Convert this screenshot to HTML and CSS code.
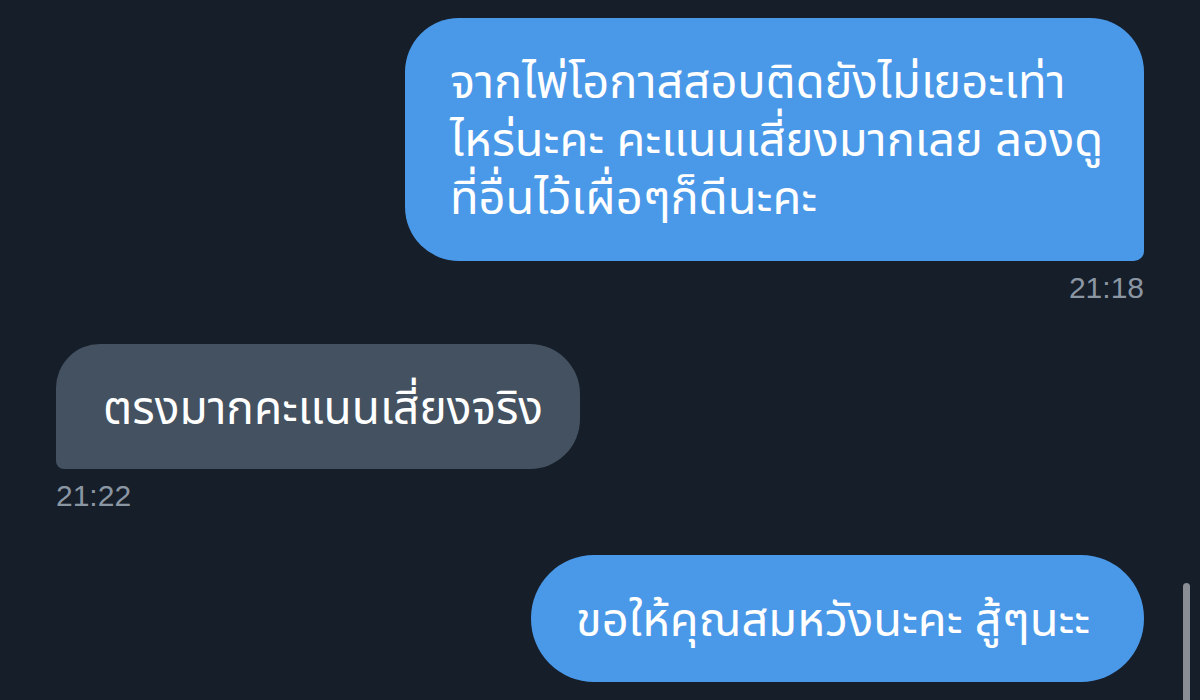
FILE: index.html
```html
<!DOCTYPE html>
<html lang="th">
<head>
<meta charset="utf-8">
<title>DM</title>
<link rel="stylesheet" href="styles.css">
</head>
<body>
<div class="chat">
  <div class="msg msg-out">
    <div class="bubble bubble-blue bubble-first">
      <span class="line">จากไพ่โอกาสสอบติดยังไม่เยอะเท่า</span>
      <span class="line">ไหร่นะคะ คะแนนเสี่ยงมากเลย ลองดู</span>
      <span class="line">ที่อื่นไว้เผื่อๆก็ดีนะคะ</span>
    </div>
    <div class="time">21:18</div>
  </div>
  <div class="msg msg-in">
    <div class="bubble bubble-gray">
      <span class="line">ตรงมากคะแนนเสี่ยงจริง</span>
    </div>
    <div class="time">21:22</div>
  </div>
  <div class="msg msg-out msg-last">
    <div class="bubble bubble-blue bubble-last">
      <span class="line">ขอให้คุณสมหวังนะคะ สู้ๆนะะ</span>
    </div>
  </div>
</div>
<div class="scrollbar"></div>
</body>
</html>
```
FILE: styles.css
```css
html, body {
  margin: 0;
  padding: 0;
  height: 100%;
  overflow: hidden;
}
body {
  background: #161e29;
  font-family: "Noto Sans", "Noto Sans Thai", "DejaVu Sans", sans-serif;
  color: #ffffff;
  position: relative;
}
.chat {
  display: flex;
  flex-direction: column;
  padding: 18px 56px 0 56px;
}
.msg {
  display: flex;
  flex-direction: column;
}
.msg-out {
  align-items: flex-end;
}
.msg-in {
  align-items: flex-start;
  margin-top: 39px;
}
.msg-last {
  margin-top: 42px;
}
.bubble {
  font-size: 47px;
  line-height: 58px;
  display: flex;
  flex-direction: column;
  box-sizing: border-box;
}
.line {
  white-space: nowrap;
}
.bubble-blue {
  background: #4a98e8;
}
.bubble-gray {
  background: #435160;
}
.bubble-first {
  width: 739px;
  height: 243px;
  padding: 33px 45px 0 45px;
  border-radius: 54px 54px 10px 54px;
}
.bubble-gray {
  width: 524px;
  height: 125px;
  padding: 33px 47px 0 47px;
  border-radius: 44px 50px 50px 8px;
  font-size: 46px;
}
.bubble-last {
  width: 613px;
  height: 127px;
  padding: 34px 45px 0 45px;
  border-radius: 63px;
}
.time {
  font-family: "Liberation Sans", Arial, sans-serif;
  font-size: 30px;
  color: #8b96a3;
  margin-top: 10px;
  line-height: 34px;
}
.scrollbar {
  position: absolute;
  left: 1183px;
  top: 583px;
  width: 7px;
  height: 130px;
  border-radius: 4px;
  background: #8b8e94;
}
```
